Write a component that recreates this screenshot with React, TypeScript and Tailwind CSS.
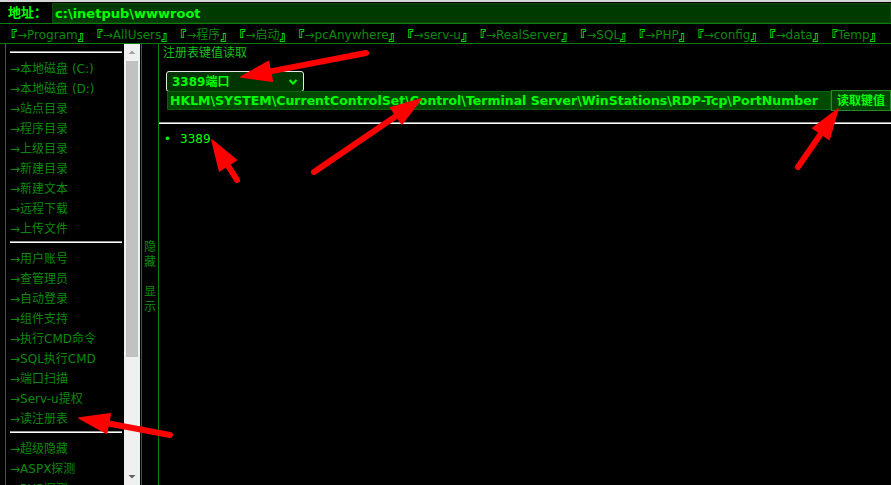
import React from "react";

const navItems = [
  "→Program",
  "→AllUsers",
  "→程序",
  "→启动",
  "→pcAnywhere",
  "→serv-u",
  "→RealServer",
  "→SQL",
  "→PHP",
  "→config",
  "→data",
  "Temp",
];

const menuGroups: string[][] = [
  [
    "本地磁盘 (C:)",
    "本地磁盘 (D:)",
    "站点目录",
    "程序目录",
    "上级目录",
    "新建目录",
    "新建文本",
    "远程下载",
    "上传文件",
  ],
  [
    "用户账号",
    "查管理员",
    "自动登录",
    "组件支持",
    "执行CMD命令",
    "SQL执行CMD",
    "端口扫描",
    "Serv-u提权",
    "读注册表",
  ],
  ["超级隐藏", "ASPX探测", "PHP探测"],
];

// red annotation arrows: tail -> tip
const arrows: [number, number, number, number][] = [
  [366, 53, 241, 77],
  [314, 172, 421, 99],
  [237, 180, 212, 140],
  [798, 167, 838, 109],
  [170, 435, 79, 418],
];

function Arrow({ x1, y1, x2, y2 }: { x1: number; y1: number; x2: number; y2: number }) {
  const dx = x2 - x1;
  const dy = y2 - y1;
  const len = Math.hypot(dx, dy);
  const ux = dx / len;
  const uy = dy / len;
  const head = 30;
  const half = 10;
  const bx = x2 - ux * head;
  const by = y2 - uy * head;
  const pts = [
    `${x2},${y2}`,
    `${bx - uy * half},${by + ux * half}`,
    `${bx + uy * half},${by - ux * half}`,
  ].join(" ");
  return (
    <g>
      <line
        x1={x1}
        y1={y1}
        x2={bx + ux * 4}
        y2={by + uy * 4}
        stroke="#ff0000"
        strokeWidth={6}
        strokeLinecap="round"
      />
      <polygon points={pts} fill="#ff0000" stroke="#ff0000" strokeWidth={1.5} strokeLinejoin="round" />
    </g>
  );
}

function Separator() {
  return <div className="mt-[2px] mb-[6px] mr-[2px] h-[2px] border-t border-[#9a9a9a] bg-white" />;
}

export default function App() {
  return (
    <div className="relative w-[891px] h-[485px] overflow-hidden bg-black font-['DejaVu_Sans','Noto_Sans_CJK_SC',sans-serif] text-[12px]">
      {/* address bar */}
      <div className="h-[2px] bg-[#d4d4d4]" />
      <div className="flex h-[22px] items-end border-b border-[#0b7d0b]">
        <span className="w-[52px] pl-[8px] pb-[1px] text-[13px] leading-[18px] font-bold text-[#00ff00]">地址：</span>
        <div className="flex-1 h-[20px] border border-[#0b4a0b] bg-[#003a00] pl-[2px] pt-[1px] text-[13px] leading-[17px] font-bold text-[#00ff00]">
          c:\inetpub\wwwroot
        </div>
      </div>

      {/* shortcut links */}
      <div className="flex h-[20px] items-center gap-[11px] border-b border-[#0b7d0b] pl-[10px] pt-[3px] text-[12px] whitespace-nowrap">
        {navItems.map((item) => (
          <span key={item} className="flex items-center">
            <span className="-ml-[6px] font-['Noto_Sans_CJK_SC'] text-[13px] font-black text-[#00ff00]">『</span>
            <span className="text-[#0a8a0a]">{item}</span>
            <span className="-mr-[6px] font-['Noto_Sans_CJK_SC'] text-[13px] font-black text-[#00ff00]">』</span>
          </span>
        ))}
      </div>

      <div className="flex h-[441px]">
        {/* left menu */}
        <div className="ml-[5px] w-[119px] border-l border-[#0b7d0b] pl-[4px] pt-[5px] overflow-hidden">
          {menuGroups.map((group, i) => (
            <div key={i}>
              <Separator />
              {group.map((label) => (
                <div key={label} className="h-[20px] leading-[20px] text-[#0a8a0a] whitespace-nowrap">
                  →{label}
                </div>
              ))}
            </div>
          ))}
        </div>

        {/* scrollbar */}
        <div className="flex w-[16px] flex-col items-center bg-[#f0f0f0]">
          <svg width="16" height="14" viewBox="0 0 16 14" className="mt-[1px]">
            <path d="M4.5 9 L8 5.5 L11.5 9 Z" fill="#a3a3a3" />
          </svg>
          <div className="mt-[2px] h-[296px] w-[12px] bg-[#c1c1c1]" />
          <div className="flex-1" />
          <svg width="16" height="14" viewBox="0 0 16 14" className="mb-[1px]">
            <path d="M4.5 5 L8 8.5 L11.5 5 Z" fill="#606060" />
          </svg>
        </div>

        {/* hide / show toggle */}
        <div className="ml-[1px] flex w-[18px] flex-col items-center border-x border-[#0b7d0b] pt-[196px] text-[12px] leading-[15px] text-[#0a8a0a]">
          <span>隐</span>
          <span>藏</span>
          <span className="mt-[15px]">显</span>
          <span>示</span>
        </div>

        {/* main content */}
        <div className="flex-1 pt-[1px]">
          <div className="pl-[4px] h-[16px] leading-[16px] text-[#19c019]">注册表键值读取</div>
          <div className="ml-[7px] mt-[10px] flex h-[21px] w-[138px] items-center justify-between rounded-[3px] border border-[#e8e8e8] bg-[#003400] pl-[5px] pr-[5px]">
            <span className="font-bold text-[#00ff00]">3389端口</span>
            <svg width="10" height="8" viewBox="0 0 10 8">
              <path d="M1.5 2 L5 5.5 L8.5 2" fill="none" stroke="#00ff00" strokeWidth="2" />
            </svg>
          </div>
          <div className="ml-[8px] mt-[-1px] flex">
            <div className="h-[19px] w-[664px] border border-[#0b600b] bg-[#004a00] pl-[2px] text-[12.5px] leading-[17px] font-bold text-[#00ff00] whitespace-nowrap">
              HKLM\SYSTEM\CurrentControlSet\Control\Terminal Server\WinStations\RDP-Tcp\PortNumber
            </div>
            <button className="-mt-[1px] h-[21px] flex-1 border border-[#2a8a2a] bg-[#004200] pl-[5px] text-left text-[12px] font-bold text-[#00ff00]">
              读取键值
            </button>
          </div>
          <div className="mt-[11px] h-[2px] border-t border-[#9a9a9a] bg-white" />
          <ul className="mt-[6px] pl-[5px] text-[#00ff00] leading-[18px]">
            <li className="flex">
              <span className="w-[16px]">•</span>
              <span>3389</span>
            </li>
          </ul>
        </div>
      </div>

      {/* annotation arrows */}
      <svg className="pointer-events-none absolute inset-0" width="891" height="485">
        {arrows.map(([x1, y1, x2, y2], i) => (
          <Arrow key={i} x1={x1} y1={y1} x2={x2} y2={y2} />
        ))}
      </svg>
    </div>
  );
}
